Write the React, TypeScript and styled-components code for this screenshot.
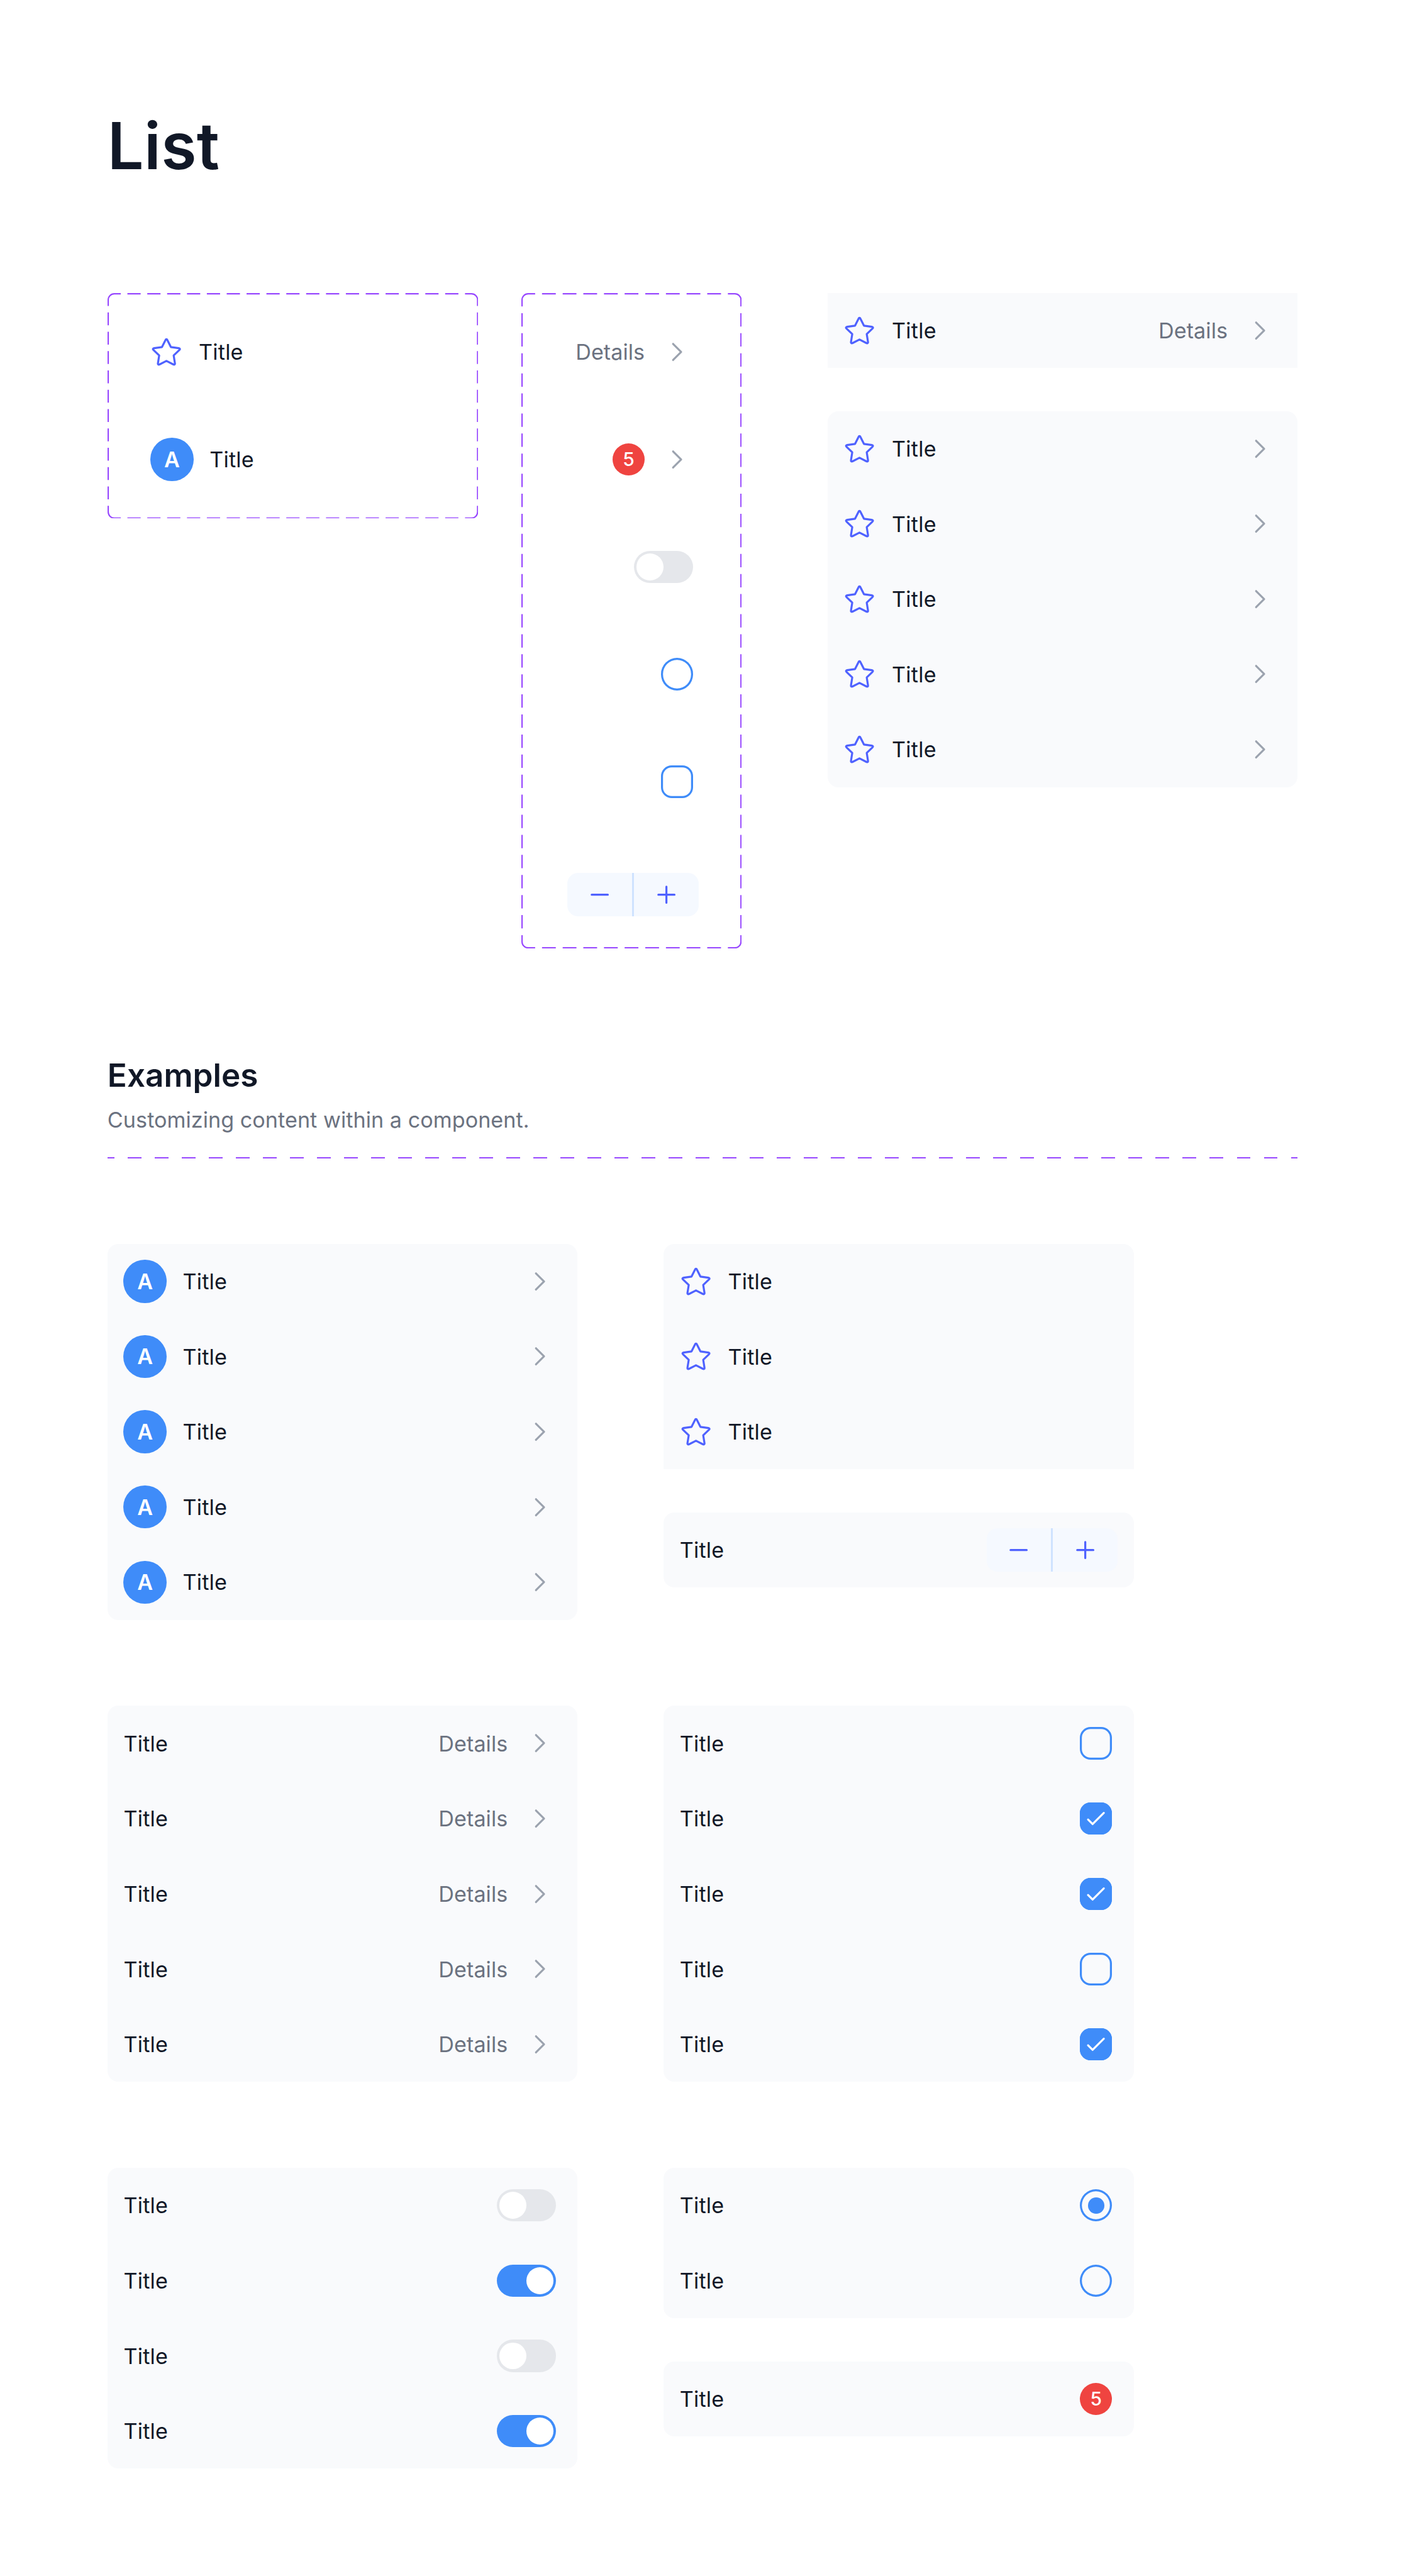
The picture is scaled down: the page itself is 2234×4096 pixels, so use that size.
import React from "react";
import styled, { createGlobalStyle } from "styled-components";

/* One design unit in CSS pixels. */
const UNIT = 2234 / 1046;
const u = (n: number) => `${+(n * UNIT).toFixed(3)}px`;

const color = {
  text: "#111827",
  muted: "#6b7280",
  subtle: "#9ca3af",
  panel: "#f9fafc",
  blue: "#3f8cf9",
  indigo: "#4f62ff",
  red: "#ef4440",
  track: "#e5e7eb",
  stepper: "#f5f9ff",
  stepperLine: "#cfe3ff",
  purple: "#9747ff",
};

const GlobalStyle = createGlobalStyle`
  html, body { margin: 0; background: #fff; }
  body {
    font-family: Inter, "Liberation Sans", sans-serif;
    font-size: ${u(16)};
    color: ${color.text};
    -webkit-font-smoothing: antialiased;
    font-optical-sizing: none;
  }
  *, *::before, *::after { box-sizing: border-box; }
`;

const Page = styled.main`
  width: ${u(1046)};
  height: 4096px;
  padding: ${u(80)};
  overflow: hidden;
  background: #fff;
`;

const PageTitle = styled.h1`
  margin: 0 0 ${u(80)};
  font-size: ${u(48)};
  line-height: ${u(58)};
  font-weight: 600;
  letter-spacing: ${u(0.12)};
`;

const Showcase = styled.section`
  display: flex;
  align-items: flex-start;
  gap: ${u(32)};
`;

const Frame = styled.div<{ $width: number; $height: number }>`
  position: relative;
  flex: none;
  display: flex;
  flex-direction: column;
  gap: ${u(24)};
  width: ${(p) => u(p.$width)};
  height: ${(p) => u(p.$height)};
  padding: ${u(16)};
`;

const FrameOutline = styled.svg`
  position: absolute;
  inset: 0;
  width: 100%;
  height: 100%;
  fill: none;
  stroke: ${color.purple};
  stroke-width: 1;
`;

const FrameRow = styled.div<{ $end?: boolean; $tall?: boolean }>`
  flex: none;
  display: flex;
  align-items: center;
  justify-content: ${(p) => (p.$end ? "flex-end" : "flex-start")};
  gap: ${u(12)};
  height: ${(p) => u(p.$tall ? 64 : 56)};
  padding: 0 ${(p) => u(p.$end ? (p.$tall ? 16 : 20) : 16)};
`;

const Column = styled.div<{ $indent?: boolean }>`
  flex: none;
  display: flex;
  flex-direction: column;
  gap: ${u(32)};
  width: ${u(350)};
  margin-left: ${(p) => (p.$indent ? u(32) : 0)};
`;

const Panel = styled.ul<{ $shape?: "square" | "top" }>`
  list-style: none;
  margin: 0;
  padding: 0;
  width: ${u(350)};
  background: ${color.panel};
  border-radius: ${(p) =>
    p.$shape === "square"
      ? "0"
      : p.$shape === "top"
        ? `${u(8)} ${u(8)} 0 0`
        : u(8)};
`;

const Item = styled.li<{ $tight?: boolean }>`
  display: flex;
  align-items: center;
  gap: ${u(12)};
  height: ${u(56)};
  padding: 0 ${(p) => u(p.$tight ? 12 : 16)} 0 ${u(12)};
`;

const Label = styled.span`
  padding-top: ${u(0.28)};
  line-height: ${u(24)};
  letter-spacing: ${u(0.09)};
  white-space: nowrap;
`;

const Trailing = styled.span`
  display: flex;
  align-items: center;
  gap: ${u(12)};
  margin-left: auto;
`;

const Detail = styled(Label)`
  color: ${color.muted};
  letter-spacing: ${u(0.02)};
`;

const Icon = styled.svg<{ $tone: string }>`
  display: block;
  flex: none;
  width: ${u(24)};
  height: ${u(24)};
  fill: none;
  stroke: ${(p) => p.$tone};
  stroke-width: 1.5;
  stroke-linecap: round;
  stroke-linejoin: round;
`;

const AvatarCircle = styled.span`
  flex: none;
  display: flex;
  align-items: center;
  justify-content: center;
  width: ${u(32)};
  height: ${u(32)};
  border-radius: 50%;
  background: ${color.blue};
  color: #fff;
  font-weight: 600;
  line-height: ${u(24)};
`;

const Count = styled.span`
  flex: none;
  display: flex;
  align-items: center;
  justify-content: center;
  width: ${u(24)};
  height: ${u(24)};
  border-radius: 50%;
  background: ${color.red};
  color: #fff;
  font-size: ${u(14)};
  font-weight: 500;
  line-height: ${u(20)};
`;

const Track = styled.span<{ $on?: boolean }>`
  flex: none;
  display: flex;
  align-items: center;
  justify-content: ${(p) => (p.$on ? "flex-end" : "flex-start")};
  width: ${u(44)};
  height: ${u(24)};
  padding: ${u(2)};
  border-radius: ${u(12)};
  background: ${(p) => (p.$on ? color.blue : color.track)};
`;

const Knob = styled.span`
  width: ${u(20)};
  height: ${u(20)};
  border-radius: 50%;
  background: #fff;
`;

const Ring = styled.span`
  flex: none;
  display: flex;
  align-items: center;
  justify-content: center;
  width: ${u(24)};
  height: ${u(24)};
  border-radius: 50%;
  box-shadow: inset 0 0 0 ${u(1.5)} ${color.blue};
`;

const Dot = styled.span`
  width: ${u(12)};
  height: ${u(12)};
  border-radius: 50%;
  background: ${color.blue};
`;

const Box = styled.span<{ $checked?: boolean }>`
  flex: none;
  width: ${u(24)};
  height: ${u(24)};
  border-radius: ${u(8)};
  background: ${(p) => (p.$checked ? color.blue : "transparent")};
  box-shadow: inset 0 0 0 ${u(1.5)} ${color.blue};
`;

const StepperShell = styled.span`
  flex: none;
  display: flex;
  height: ${u(32)};
  border-radius: ${u(8)};
  overflow: hidden;
  background: ${color.stepper};
`;

const StepButton = styled.span`
  display: flex;
  align-items: center;
  justify-content: center;
  width: ${u(48)};
`;

const StepDivider = styled.span`
  width: ${u(1.5)};
  background: ${color.stepperLine};
`;

const Examples = styled.section`
  margin-top: ${u(80)};
`;

const SectionTitle = styled.h2`
  margin: 0;
  font-size: ${u(24)};
  line-height: ${u(29)};
  font-weight: 600;
`;

const SectionText = styled.p`
  margin: ${u(8)} 0 ${u(16.5)};
  color: ${color.muted};
  line-height: ${u(22)};
  letter-spacing: ${u(0.015)};
`;

const RULE_PERIOD = 886 / 44;

const Rule = styled.div`
  height: ${u(1)};
  margin-bottom: ${u(63.5)};
  background: repeating-linear-gradient(
    90deg,
    ${color.purple} 0 ${u(RULE_PERIOD / 4)},
    transparent ${u(RULE_PERIOD / 4)} ${u(RULE_PERIOD * 0.75)},
    ${color.purple} ${u(RULE_PERIOD * 0.75)} ${u(RULE_PERIOD)}
  );
`;

const ExampleGrid = styled.div`
  display: grid;
  grid-template-columns: ${u(350)} ${u(350)};
  gap: ${u(64)};
  align-items: start;
`;

const Star = () => (
  <Icon viewBox="0 0 24 24" $tone={color.indigo}>
    <path d="M11.3 3.15C11.67 2.28 12.33 2.28 12.7 3.15L15.3 8.35L21.2 9.22C22.05 9.35 22.3 9.95 21.7 10.45L17.4 14.6L18.35 20.55C18.45 21.4 17.85 21.73 17.15 21.3L12 18.68L6.85 21.3C6.15 21.73 5.55 21.4 5.65 20.55L6.6 14.6L2.3 10.45C1.7 9.95 1.95 9.35 2.8 9.22L8.7 8.35Z" />
  </Icon>
);

const Chevron = () => (
  <Icon viewBox="0 0 24 24" $tone={color.subtle}>
    <path d="M9 6L15 12L9 18" />
  </Icon>
);

const Minus = () => (
  <Icon viewBox="0 0 24 24" $tone={color.indigo}>
    <path d="M6 12H18" />
  </Icon>
);

const Plus = () => (
  <Icon viewBox="0 0 24 24" $tone={color.indigo}>
    <path d="M6 12H18M12 6V18" />
  </Icon>
);

const Avatar = () => <AvatarCircle>A</AvatarCircle>;
const Badge = () => <Count>5</Count>;

const Toggle = ({ on }: { on?: boolean }) => (
  <Track $on={on}>
    <Knob />
  </Track>
);

const Radio = ({ on }: { on?: boolean }) => <Ring>{on && <Dot />}</Ring>;

const Checkbox = ({ on }: { on?: boolean }) => (
  <Box $checked={on}>
    {on && (
      <Icon viewBox="0 0 24 24" $tone="#fff">
        <path d="M6.1 12.75L9.5 16.15L17.85 7.8" />
      </Icon>
    )}
  </Box>
);

const Stepper = () => (
  <StepperShell>
    <StepButton>
      <Minus />
    </StepButton>
    <StepDivider />
    <StepButton>
      <Plus />
    </StepButton>
  </StepperShell>
);

/* Dashes are twice the gap and are fitted so every corner carries a full dash on each side. */
const fitDash = (length: number) => {
  const gaps = Math.round((length - 10) / 15);
  const gap = length / (3 * gaps + 2);
  return { dash: gap * 2, gap };
};

function DashedOutline({ width: w, height: h }: { width: number; height: number }) {
  const x = fitDash(w);
  const y = fitDash(h);
  const corner = (cx: number, cy: number) => {
    const sx = cx ? -1 : 1;
    const sy = cy ? -1 : 1;
    const px = cx ? w - 0.5 : 0.5;
    const py = cy ? h - 0.5 : 0.5;
    const sweep = sx * sy > 0 ? 1 : 0;
    return `M${px} ${cy + sy * y.dash}V${py + sy * 4.5}A4.5 4.5 0 0 ${sweep} ${px + sx * 4.5} ${py}H${cx + sx * x.dash}`;
  };
  const startX = x.dash + x.gap;
  const startY = y.dash + y.gap;
  return (
    <FrameOutline viewBox={`0 0 ${w} ${h}`}>
      <path d={corner(0, 0) + corner(w, 0) + corner(0, h) + corner(w, h)} />
      <path
        strokeDasharray={`${x.dash} ${x.gap}`}
        d={`M${startX} .5H${w - startX}M${startX} ${h - 0.5}H${w - startX}`}
      />
      <path
        strokeDasharray={`${y.dash} ${y.gap}`}
        d={`M.5 ${startY}V${h - startY}M${w - 0.5} ${startY}V${h - startY}`}
      />
    </FrameOutline>
  );
}

interface RowProps {
  leading?: React.ReactNode;
  trailing?: React.ReactNode;
  tight?: boolean;
}

const Row = ({ leading, trailing, tight }: RowProps) => (
  <Item $tight={tight}>
    {leading}
    <Label>Title</Label>
    {trailing && <Trailing>{trailing}</Trailing>}
  </Item>
);

const DetailsChevron = () => (
  <>
    <Detail>Details</Detail>
    <Chevron />
  </>
);

const times = (n: number) => Array.from({ length: n }, (_, i) => i);

export default function App() {
  return (
    <>
      <GlobalStyle />
      <Page>
        <PageTitle>List</PageTitle>

        <Showcase>
          <Frame $width={276} $height={168}>
            <DashedOutline width={276} height={168} />
            <FrameRow>
              <Star />
              <Label>Title</Label>
            </FrameRow>
            <FrameRow>
              <Avatar />
              <Label>Title</Label>
            </FrameRow>
          </Frame>

          <Frame $width={164} $height={488}>
            <DashedOutline width={164} height={488} />
            <FrameRow $end>
              <DetailsChevron />
            </FrameRow>
            <FrameRow $end>
              <Badge />
              <Chevron />
            </FrameRow>
            <FrameRow $end>
              <Toggle />
            </FrameRow>
            <FrameRow $end>
              <Radio />
            </FrameRow>
            <FrameRow $end>
              <Checkbox />
            </FrameRow>
            <FrameRow $end $tall>
              <Stepper />
            </FrameRow>
          </Frame>

          <Column $indent>
            <Panel $shape="square">
              <Row leading={<Star />} trailing={<DetailsChevron />} />
            </Panel>
            <Panel>
              {times(5).map((i) => (
                <Row key={i} leading={<Star />} trailing={<Chevron />} />
              ))}
            </Panel>
          </Column>
        </Showcase>

        <Examples>
          <SectionTitle>Examples</SectionTitle>
          <SectionText>Customizing content within a component.</SectionText>
          <Rule />

          <ExampleGrid>
            <Panel>
              {times(5).map((i) => (
                <Row key={i} leading={<Avatar />} trailing={<Chevron />} />
              ))}
            </Panel>
            <Column>
              <Panel $shape="top">
                {times(3).map((i) => (
                  <Row key={i} leading={<Star />} />
                ))}
              </Panel>
              <Panel>
                <Row trailing={<Stepper />} tight />
              </Panel>
            </Column>

            <Panel>
              {times(5).map((i) => (
                <Row key={i} trailing={<DetailsChevron />} />
              ))}
            </Panel>
            <Panel>
              {[false, true, true, false, true].map((on, i) => (
                <Row key={i} trailing={<Checkbox on={on} />} />
              ))}
            </Panel>

            <Panel>
              {[false, true, false, true].map((on, i) => (
                <Row key={i} trailing={<Toggle on={on} />} />
              ))}
            </Panel>
            <Column>
              <Panel>
                <Row trailing={<Radio on />} />
                <Row trailing={<Radio />} />
              </Panel>
              <Panel>
                <Row trailing={<Badge />} />
              </Panel>
            </Column>
          </ExampleGrid>
        </Examples>
      </Page>
    </>
  );
}
